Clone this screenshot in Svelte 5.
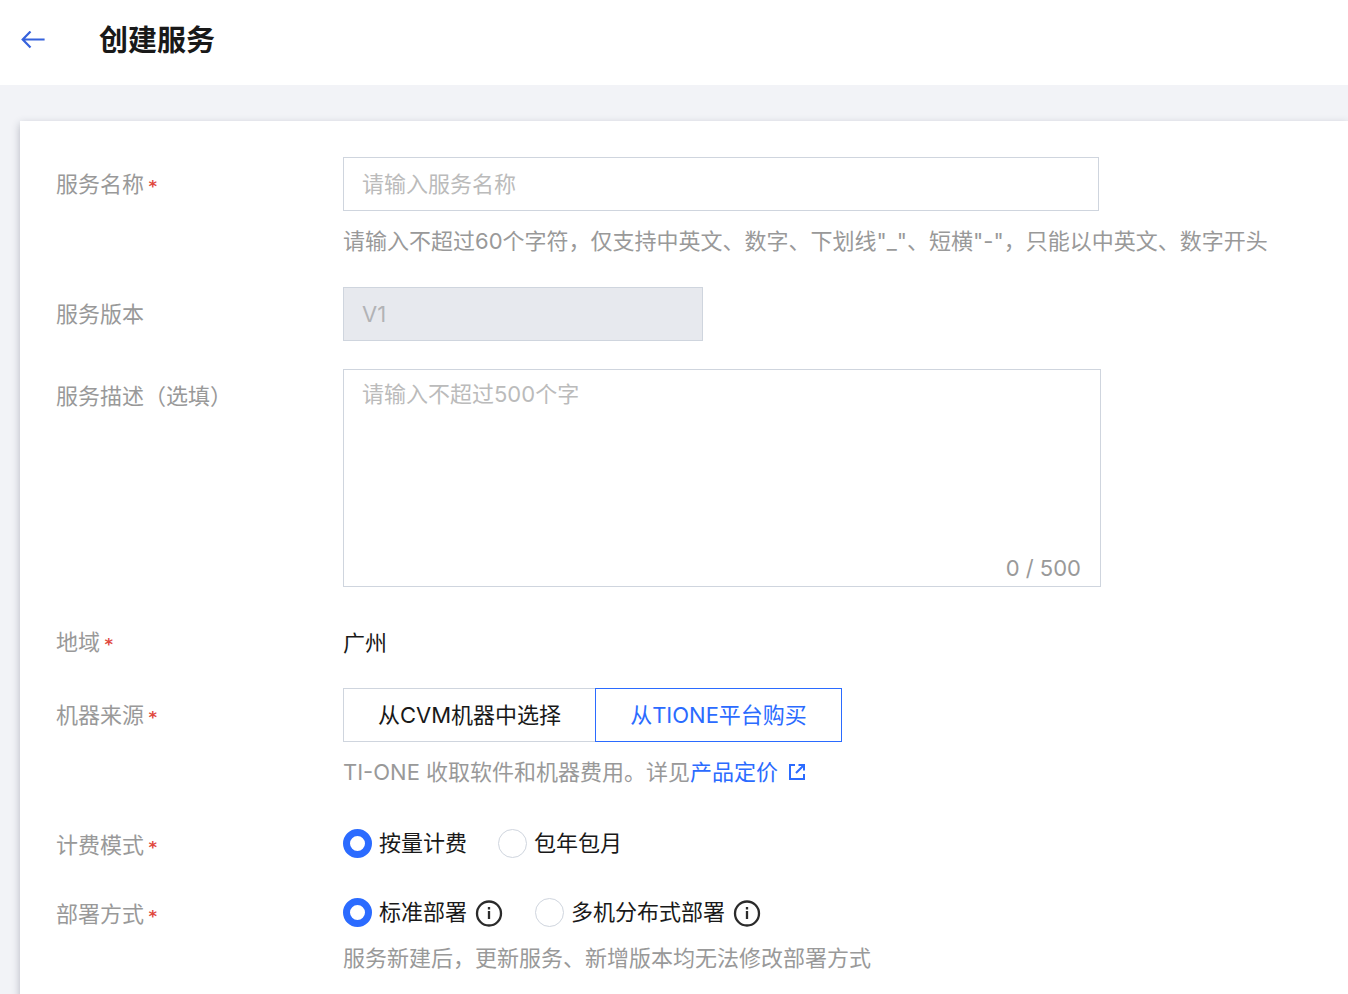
<script lang="ts">
  const maxLength = 500;

  const sources = [
    { value: 'cvm', text: '从CVM机器中选择' },
    { value: 'tione', text: '从TIONE平台购买' },
  ];
  const billingModes = [
    { value: 'postpaid', text: '按量计费' },
    { value: 'prepaid', text: '包年包月' },
  ];
  const deployModes = [
    { value: 'standard', text: '标准部署' },
    { value: 'distributed', text: '多机分布式部署' },
  ];

  let name = $state('');
  let description = $state('');
  let source = $state('tione');
  let billing = $state('postpaid');
  let deploy = $state('standard');
</script>

{#snippet required()}
  <span class="required">*</span>
{/snippet}

<header class="header">
  <button class="back" type="button" aria-label="返回">
    <svg width="26" height="20" viewBox="0 0 26 20" fill="none" stroke="currentColor" stroke-width="2.2">
      <path d="M24.6 8.5H2.5M10.5 0.5L2.7 8.5L10.5 16.5" />
    </svg>
  </button>
  <h1>创建服务</h1>
</header>

<main class="body">
  <form class="card">
    <div class="row">
      <label class="label" for="name">服务名称{@render required()}</label>
      <div class="control">
        <input id="name" class="input" type="text" placeholder="请输入服务名称" bind:value={name} />
        <p class="hint">请输入不超过60个字符，仅支持中英文、数字、下划线"_"、短横"-"，只能以中英文、数字开头</p>
      </div>
    </div>

    <div class="row">
      <label class="label" for="version">服务版本</label>
      <div class="control">
        <input id="version" class="input short" type="text" value="V1" disabled />
      </div>
    </div>

    <div class="row">
      <label class="label" for="description">服务描述（选填）</label>
      <div class="control">
        <div class="textarea-wrap">
          <textarea
            id="description"
            placeholder="请输入不超过500个字"
            maxlength={maxLength}
            bind:value={description}
          ></textarea>
          <span class="count">{description.length} / {maxLength}</span>
        </div>
      </div>
    </div>

    <div class="row">
      <span class="label">地域{@render required()}</span>
      <div class="control">
        <p class="static">广州</p>
      </div>
    </div>

    <div class="row">
      <span class="label" id="source-label">机器来源{@render required()}</span>
      <div class="control">
        <div class="segment" role="group" aria-labelledby="source-label">
          {#each sources as item}
            <button
              type="button"
              class:active={source === item.value}
              aria-pressed={source === item.value}
              onclick={() => (source = item.value)}
            >{item.text}</button>
          {/each}
        </div>
        <p class="hint">
          TI-ONE 收取软件和机器费用。详见<a href="#pricing">产品定价<svg class="external" width="16" height="16" viewBox="0 0 16 16" fill="none" stroke="currentColor" stroke-width="2">
              <path d="M6 1H1V15H15V10M9.5 1H15V6.5M15 1L7 9" />
            </svg></a>
        </p>
      </div>
    </div>

    <div class="row">
      <span class="label" id="billing-label">计费模式{@render required()}</span>
      <div class="control">
        <div class="radios" role="radiogroup" aria-labelledby="billing-label">
          {#each billingModes as item}
            <label class="radio">
              <input type="radio" name="billing" value={item.value} bind:group={billing} />
              {item.text}
            </label>
          {/each}
        </div>
      </div>
    </div>

    <div class="row">
      <span class="label" id="deploy-label">部署方式{@render required()}</span>
      <div class="control">
        <div class="radios" role="radiogroup" aria-labelledby="deploy-label">
          {#each deployModes as item}
            <label class="radio">
              <input type="radio" name="deploy" value={item.value} bind:group={deploy} />
              {item.text}
              <svg class="info" width="30" height="30" viewBox="0 0 30 30" fill="none" stroke="currentColor" stroke-width="2.3">
                <circle cx="15" cy="16.5" r="12" />
                <path d="M15 14V22M15 10V12.4" />
              </svg>
            </label>
          {/each}
        </div>
        <p class="hint">服务新建后，更新服务、新增版本均无法修改部署方式</p>
      </div>
    </div>
  </form>
</main>

<style>
  :global(body) {
    background: #f2f3f7;
    color: #191919;
    font-family: Inter, 'Noto Sans CJK SC', sans-serif;
    font-size: 22px;
    line-height: 28px;
  }

  h1,
  p {
    margin: 0;
  }

  button,
  input,
  textarea {
    box-sizing: border-box;
    margin: 0;
    border-radius: 0;
    font: inherit;
    color: inherit;
  }

  .header {
    display: flex;
    align-items: center;
    gap: 53px;
    box-sizing: border-box;
    height: 85px;
    padding: 0 20px 4px;
    background: #fff;
  }

  .back {
    display: flex;
    padding: 0;
    border: 0;
    background: none;
    color: #3662dc;
    cursor: pointer;
  }

  h1 {
    font-size: 29px;
    line-height: 38px;
    font-weight: 700;
  }

  .body {
    padding: 36px 0 0 20px;
  }

  .card {
    display: flex;
    flex-direction: column;
    gap: 28px;
    padding: 36px 36px 34px;
    background: #fff;
    box-shadow: 0 3px 8px rgba(54, 58, 80, 0.32);
  }

  .row {
    display: flex;
    align-items: flex-start;
  }

  .label {
    flex: none;
    width: 287px;
    padding-top: 13px;
    color: #999;
  }

  .required {
    margin-left: 4px;
    color: #e0483e;
    font-family: 'DejaVu Sans Mono', monospace;
    font-size: 16px;
    font-weight: 700;
    line-height: 16px;
  }

  .control {
    flex: 1;
    min-width: 0;
  }

  .input {
    display: block;
    width: 100%;
    max-width: 756px;
    height: 54px;
    padding: 0 18px;
    border: 1px solid #cfd5de;
    background: #fff;
  }

  .input.short {
    max-width: 360px;
  }

  .input:disabled {
    background: #e7e9ee;
    color: #b2b3b6;
  }

  ::placeholder {
    color: #bbb;
    opacity: 1;
  }

  .textarea-wrap {
    position: relative;
    max-width: 758px;
  }

  textarea {
    display: block;
    width: 100%;
    height: 218px;
    padding: 10px 18px;
    border: 1px solid #cfd5de;
    background: #fff;
    resize: none;
  }

  .count {
    position: absolute;
    right: 20px;
    bottom: 5px;
    color: #999;
  }

  .hint {
    margin: 14px 0 2px;
    color: #999;
    line-height: 32px;
  }

  .hint a {
    color: #2b6bff;
    text-decoration: none;
  }

  .external {
    margin-left: 11px;
  }

  .static {
    padding: 14px 0 3px;
  }

  .segment {
    display: flex;
  }

  .segment button {
    height: 54px;
    padding: 0 34px;
    border: 1px solid #cfd5de;
    background: #fff;
    cursor: pointer;
  }

  .segment button + button {
    margin-left: -1px;
  }

  .segment button.active {
    z-index: 1;
    border: 1px solid #2b6bff;
    color: #2b6bff;
  }

  .radios {
    display: flex;
    gap: 31px;
    padding: 11px 0 2px;
  }

  .radio {
    display: flex;
    align-items: center;
    gap: 7px;
    height: 28px;
    cursor: pointer;
  }

  .radio input {
    flex: none;
    width: 29px;
    height: 29px;
    border: 1px solid #cfd5de;
    border-radius: 50%;
    background: #fff;
    appearance: none;
  }

  .radio input:checked {
    border: 7px solid #2b6bff;
  }

  .info {
    flex: none;
    color: #2b2b2b;
  }
</style>
